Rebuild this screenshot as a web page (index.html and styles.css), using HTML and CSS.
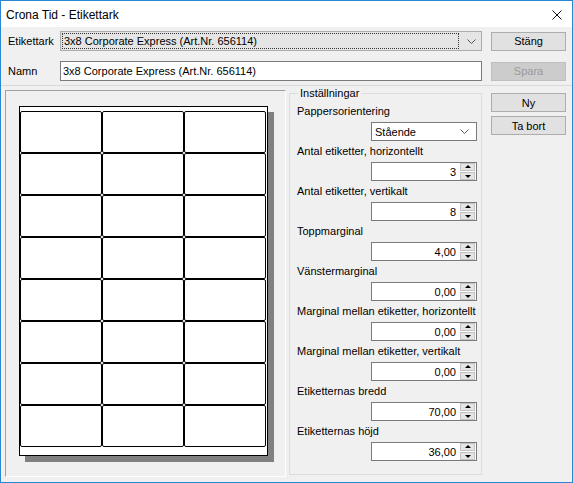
FILE: index.html
```html
<!DOCTYPE html>
<html lang="sv">
<head>
  <meta charset="UTF-8">
  <title>Crona Tid - Etikettark</title>
  <link rel="stylesheet" href="styles.css">
</head>
<body>
  <div class="window">
    <div class="titlebar">
      <span class="title">Crona Tid - Etikettark</span>
      <svg class="close" width="10" height="10" viewBox="0 0 10 10">
        <path d="M0.5 0.5 L9.5 9.5 M9.5 0.5 L0.5 9.5" stroke="#111" stroke-width="1" fill="none"/>
      </svg>
    </div>

    <div class="client">
      <div class="row">
        <span class="row-label">Etikettark</span>
        <div class="combo combo-readonly">
          <span class="focus-rect">3x8 Corporate Express (Art.Nr. 656114)</span>
          <svg class="chevron" width="9" height="5" viewBox="0 0 9 5"><polyline points="0.5,0.5 4.5,4.5 8.5,0.5" fill="none" stroke="#555" stroke-width="1"/></svg>
        </div>
        <button class="btn">Stäng</button>
      </div>

      <div class="row row-name">
        <span class="row-label">Namn</span>
        <div class="textbox">3x8 Corporate Express (Art.Nr. 656114)</div>
        <button class="btn" disabled>Spara</button>
      </div>

      <div class="main">
        <div class="preview">
          <div class="paper">
            <div class="labels" id="labels"></div>
          </div>
        </div>

        <fieldset class="settings">
          <legend>Inställningar</legend>

          <div class="field-label">Pappersorientering</div>
          <div class="combo combo-edit">
            <span>Stående</span>
            <svg class="chevron" width="9" height="5" viewBox="0 0 9 5"><polyline points="0.5,0.5 4.5,4.5 8.5,0.5" fill="none" stroke="#555" stroke-width="1"/></svg>
          </div>

          <div class="field-label">Antal etiketter, horizontellt</div>
          <div class="spinner"><span class="value">3</span><span class="arrows"><i class="up"></i><i class="down"></i></span></div>

          <div class="field-label">Antal etiketter, vertikalt</div>
          <div class="spinner"><span class="value">8</span><span class="arrows"><i class="up"></i><i class="down"></i></span></div>

          <div class="field-label">Toppmarginal</div>
          <div class="spinner"><span class="value">4,00</span><span class="arrows"><i class="up"></i><i class="down"></i></span></div>

          <div class="field-label">Vänstermarginal</div>
          <div class="spinner"><span class="value">0,00</span><span class="arrows"><i class="up"></i><i class="down"></i></span></div>

          <div class="field-label">Marginal mellan etiketter, horizontellt</div>
          <div class="spinner"><span class="value">0,00</span><span class="arrows"><i class="up"></i><i class="down"></i></span></div>

          <div class="field-label">Marginal mellan etiketter, vertikalt</div>
          <div class="spinner"><span class="value">0,00</span><span class="arrows"><i class="up"></i><i class="down"></i></span></div>

          <div class="field-label">Etiketternas bredd</div>
          <div class="spinner"><span class="value">70,00</span><span class="arrows"><i class="up"></i><i class="down"></i></span></div>

          <div class="field-label">Etiketternas höjd</div>
          <div class="spinner"><span class="value">36,00</span><span class="arrows"><i class="up"></i><i class="down"></i></span></div>
        </fieldset>

        <div class="side-buttons">
          <button class="btn">Ny</button>
          <button class="btn">Ta bort</button>
        </div>
      </div>
    </div>
  </div>

  <script>
    // 3 x 8 labels on the sheet
    const labels = document.getElementById('labels');
    for (let i = 0; i < 24; i++) {
      const cell = document.createElement('div');
      cell.className = 'label';
      labels.appendChild(cell);
    }
  </script>
</body>
</html>
```

FILE: styles.css
```css
* { margin: 0; padding: 0; box-sizing: border-box; }
body {
  font-family: 'Liberation Sans', Arial, sans-serif;
  font-size: 11px;
  color: #000;
  background: #ffffff;
}

.window {
  width: 573px;
  height: 483px;
  border: 1px solid #2b87d3;
  background: #f0f0f0;
  display: flex;
  flex-direction: column;
}

.titlebar {
  height: 26px;
  background: #fff;
  display: flex;
  align-items: center;
  justify-content: space-between;
  padding: 0 10px 0 5px;
}
.title { font-size: 12px; margin-top: 1px; }
.close { margin-top: 1px; }

.client { flex: 1; padding-top: 4px; display: flex; flex-direction: column; }

.row {
  display: flex;
  align-items: center;
  height: 20px;
  padding-left: 7px;
}
.row-name { margin-top: 10px; }
.row-label { width: 52px; }

.combo {
  position: relative;
  display: flex;
  align-items: center;
  height: 20px;
}
.combo .chevron { margin-left: auto; }
.combo-readonly {
  width: 422px;
  background: #e5e5e5;
  border: 1px solid #acacac;
  padding: 1px 5px 1px 1px;
}
.focus-rect {
  flex: 1;
  height: 100%;
  border: 1px dotted #333;
  padding-left: 1px;
  line-height: 14px;
  margin-right: 8px;
}
.combo-edit {
  width: 106px;
  height: 19px;
  margin-left: 74px;
  background: #fff;
  border: 1px solid #7a7a7a;
  padding: 0 7px 0 3px;
}

.textbox {
  width: 422px;
  height: 20px;
  background: #fff;
  border: 1px solid #7a7a7a;
  padding-left: 2px;
  line-height: 18px;
}

.btn {
  font-family: inherit;
  font-size: 11px;
  color: #000;
  width: 75px;
  height: 19px;
  background: #e1e1e1;
  border: 1px solid #adadad;
}
.row .btn { margin-left: 9px; }
.btn:disabled { background: #cccccc; border-color: #bfbfbf; color: #9a9a9a; }

.main {
  flex: 1;
  margin-top: 4px;
  border-top: 1px solid #d9d9d9;
  display: flex;
  align-items: flex-start;
  padding-left: 4px;
}

.preview {
  width: 281px;
  height: 387px;
  margin-top: 4px;
  border-top: 1px solid #a0a0a0;
  border-left: 1px solid #a0a0a0;
  border-right: 1px solid #fff;
  border-bottom: 1px solid #fff;
  padding: 15px 0 0 13px;
}

.paper {
  width: 249px;
  height: 350px;
  background: #fff;
  border: 1px solid #000;
  box-shadow: 6px 6px 0 #808080;
  padding-top: 4px;
}
.labels {
  display: grid;
  grid-template-columns: repeat(3, 82px);
  grid-template-rows: repeat(8, 42px);
}
.label {
  border: 1px solid #000;
  border-radius: 2px;
}

.settings {
  width: 193px;
  height: 389px;
  margin-left: 3px;
  border: 1px solid #dcdcdc;
  padding: 1px 0 0 7px;
}
.settings legend {
  margin-left: 1px;
  padding: 0 2px;
  line-height: 14px;
}
.field-label { line-height: 21px; height: 21px; white-space: nowrap; }

.spinner {
  display: flex;
  align-items: center;
  width: 106px;
  height: 19px;
  margin-left: 74px;
  background: #fff;
  border: 1px solid #7a7a7a;
  padding-right: 1px;
}
.spinner .value { flex: 1; text-align: right; padding-right: 4px; }
.arrows { display: flex; flex-direction: column; gap: 1px; }
.arrows i {
  position: relative;
  display: block;
  width: 15px;
  height: 8px;
  background: #e5e5e5;
  border: 1px solid #c2c2c2;
}
.arrows i::after {
  content: '';
  position: absolute;
  left: 4px;
  border-left: 3px solid transparent;
  border-right: 3px solid transparent;
}
.arrows .up::after { top: 1px; border-bottom: 3px solid #000; }
.arrows .down::after { top: 2px; border-top: 3px solid #000; }

.side-buttons {
  display: flex;
  flex-direction: column;
  gap: 4px;
  margin-left: 9px;
  margin-top: 7px;
}
```
